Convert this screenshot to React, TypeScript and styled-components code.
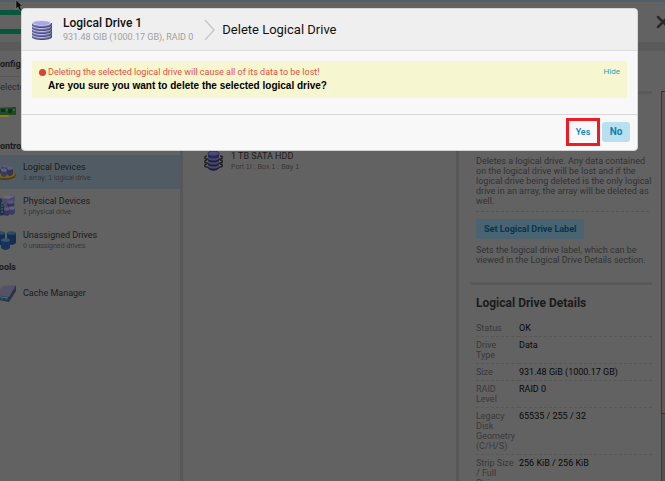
import React from "react";
import styled, { createGlobalStyle, css } from "styled-components";

const headingFont = `Roboto, sans-serif`;

const GlobalStyle = createGlobalStyle`
  * { box-sizing: border-box; }
  html, body { margin: 0; overflow: hidden; }
  body { background: #626262; color: #1b1b1b; font: 9px/10px Roboto, Arial, sans-serif; }
  button { font: inherit; border: 0; padding: 0; cursor: pointer; }
  h1, h2, h3, p, ul { margin: 0; padding: 0; }
`;

const Page = styled.div`
  height: 100vh;
  display: flex;
  flex-direction: column;
  overflow: hidden;
`;

const TopBar = styled.header`
  flex: none;
  height: 42px;
  display: flex;
  justify-content: space-between;
  align-items: center;
  border-top: 2px solid #4f5e68;
  overflow: hidden;
`;

const Logo = styled.div`
  width: 60px;
  height: 24px;
  border: solid #06573c;
  border-width: 5px 5px 5px 0;
`;

const CloseButton = styled.button`
  width: 14px;
  height: 14px;
  margin-right: -5px;
  background: none;
  svg { display: block; }
`;

const Band = styled.div`
  flex: none;
  height: 9px;
  background: #5a5a5a;
`;

const Columns = styled.div`
  flex: 1;
  min-height: 0;
  display: flex;
`;

const Sidebar = styled.nav`
  flex: 0 0 193px;
  margin-left: -10px;
  border-right: 3px solid #575757;
  overflow: hidden;
`;

const SideHeading = styled.h2<{ $ruled?: boolean }>`
  padding: 2px 0 1px 4px;
  font: bold 9px/16px ${headingFont};
  ${(p) => p.$ruled && css`
    padding: 5px 0 4px 4px;
    border-bottom: 1px solid #585858;
  `}
`;

const SideNote = styled.p`
  padding: 5px 0 5px 5px;
  color: #2b2b2b;
`;

const BoardSlot = styled.div`
  height: 39px;
  padding: 8px 0 0 2px;
  svg { display: block; }
`;

const NavList = styled.ul`
  list-style: none;
`;

const NavLink = styled.a<{ $active?: boolean }>`
  height: 34px;
  display: flex;
  align-items: center;
  gap: 7px;
  padding-left: 3px;
  color: inherit;
  text-decoration: none;
  background: ${(p) => (p.$active ? "#515b63" : "transparent")};
  svg { flex: none; }
`;

const NavTitle = styled.span`
  display: block;
  line-height: 11px;
`;

const NavSub = styled.span`
  display: block;
  font: 7px/10px "Liberation Sans", Arial, sans-serif;
  color: #363636;
`;

const DeviceArea = styled.section`
  flex: 1;
  min-width: 0;
  border-right: 3px solid #585858;
  padding: 99px 21px 0;
`;

const Device = styled.div`
  display: flex;
  align-items: center;
  gap: 8px;
`;

const Details = styled.aside`
  flex: 0 0 202px;
  padding: 40px 0 0 11px;
  overflow: hidden;
`;

const Actions = styled.section`
  margin-right: 9px;
  padding: 0 3px 0 6px;
  border-top: 3px solid #5a5a5a;
`;

const Description = styled.p`
  margin-right: -7px;
  color: #333333;
`;

const DeleteAction = styled.div`
  padding: 62px 0 5px;
  border-bottom: 1px dashed #545454;
`;

const LabelButton = styled.button`
  display: block;
  height: 20px;
  margin: 7px 0 6px;
  padding: 0 8px;
  border-radius: 3px;
  background: #496370;
  color: #043550;
  font: bold 9px/20px ${headingFont};
`;

const Facts = styled.section`
  margin: 17px 9px 0 0;
  border-top: 3px solid #595959;
  padding: 8px 0 0 6px;
`;

const FactsTitle = styled.h2`
  font: bold 12px/20px ${headingFont};
  margin-bottom: 7px;
`;

const FactTable = styled.table`
  width: 100%;
  border-collapse: separate;
  border-spacing: 0;
  th, td {
    padding: 3px 0;
    border-bottom: 1px dashed #575757;
    font-weight: normal;
    text-align: left;
    vertical-align: top;
  }
  th { width: 43px; padding-right: 2px; color: #393939; }
  td { color: #080808; }
`;

const Edge = styled.div`
  flex: 0 0 4px;
  margin-top: 40px;
  display: flex;
  flex-direction: column;
`;

const EdgeTrack = styled.div`
  height: 323px;
  border: solid #393335;
  border-width: 1px 0 1px 1px;
  background: #635659;
`;

const EdgeRest = styled.div`
  flex: 1;
  background: #515253;
  border-left: 1px solid #393939;
`;

const Overlay = styled.div`
  position: fixed;
  inset: 0;
  padding: 8px 27px 0 21px;
`;

const Dialog = styled.div`
  border: 1px solid #d3d5d5;
  border-radius: 4px;
  background: #f8f8f8;
  overflow: hidden;
`;

const DialogHeader = styled.header`
  height: 42px;
  display: flex;
  align-items: center;
  padding-left: 9px;
  background: #efefef;
  border-bottom: 1px solid #dddddd;
`;

const Subject = styled.div`
  margin: 0 11px 0 10px;
`;

const SubjectName = styled.h2`
  font: 500 12px/16px ${headingFont};
  color: #111;
`;

const SubjectMeta = styled.p`
  font: 9px/13px ${headingFont};
  color: #a0a0a0;
`;

const DialogTitle = styled.h1`
  margin-left: 6px;
  font: 13px/20px ${headingFont};
  color: #111;
`;

const Warning = styled.div`
  display: grid;
  grid-template-columns: 7px 1fr auto;
  column-gap: 2px;
  margin: 10px 10px 16px;
  padding: 5px 7px 4px;
  background: #f6f7d0;
`;

const Dot = styled.span`
  width: 7px;
  height: 7px;
  margin-top: 3px;
  border-radius: 50%;
  background: #db422d;
`;

const WarningText = styled.p`
  line-height: 12px;
  color: #e0523d;
`;

const Question = styled.p`
  font: bold 10px/16px "Liberation Sans", Arial, sans-serif;
  color: #000;
`;

const HideLink = styled.a`
  font-size: 8px;
  line-height: 12px;
  color: #1ba0c5;
  text-decoration: none;
`;

const DialogFooter = styled.footer`
  display: flex;
  justify-content: flex-end;
  align-items: center;
  gap: 2px;
  padding: 3px 7px 4px 0;
  border-top: 1px solid #d8d8d8;
`;

const Highlight = styled.div`
  border: 3px solid #ed1c24;
`;

const Choice = styled.button<{ $primary?: boolean }>`
  display: block;
  height: ${(p) => (p.$primary ? 20 : 22)}px;
  width: 28px;
  border-radius: 3px;
  font: ${(p) => (p.$primary ? "bold 10px" : "500 9px")}/20px ${headingFont};
  color: #0d7fb0;
  background: ${(p) => (p.$primary ? "#b9e0f1" : "#f8f8f8")};
`;

const Pointer = styled.svg`
  position: fixed;
  left: 15px;
  top: 0;
`;

function DiscStack({ size = 22 }: { size?: number }) {
  return (
    <svg width={size} height={size} viewBox="0 0 22 22" aria-hidden="true">
      {[17, 14, 11, 8, 5].map((y) => (
        <g key={y}>
          <path d={`M1 ${y - 1}v2c0 4 20 4 20 0v-2`} fill="#4c4c70" />
          <path d={`M1 ${y - 1}v1c0 4 19 4 19 0v-1`} fill="#7474bd" />
          <ellipse cx="10.5" cy={y - 1} rx="9.5" ry="2.7" fill="#dedef3" />
          <ellipse cx="10.5" cy={y - 1} rx="8.5" ry="2" fill="#a9a9e2" />
        </g>
      ))}
    </svg>
  );
}

function DiskIcon() {
  return (
    <svg width="19" height="22" viewBox="0 0 19 22" aria-hidden="true">
      <path d="M4 3v14c0 5 11 5 11 0V3" fill="#29294e" />
      {[7, 11, 15].map((y) => (
        <g key={y}>
          <path d={`M3 ${y - 1}c-3 0-3 3 0 3 4 3 9 3 13 0 3 0 3-3 0-3`} fill="none" stroke="#202024" strokeWidth="1.4" />
          <path d={`M4 ${y}c3 2 8 2 11 0v2c-3 2-8 2-11 0z`} fill="#474770" />
        </g>
      ))}
      <ellipse cx="9.5" cy="3.5" rx="5.5" ry="2.5" fill="#4b4b78" stroke="#30304c" />
    </svg>
  );
}

function Can({ x, y, w, h, body, top }: { x: number; y: number; w: number; h: number; body: string; top: string }) {
  return (
    <g>
      <path d={`M${x} ${y + 2}v${h - 4}q${w / 2} 4 ${w} 0v-${h - 4}`} fill={body} />
      <ellipse cx={x + w / 2} cy={y + 2} rx={w / 2} ry="1.8" fill={top} />
    </g>
  );
}

function ArrayIcon() {
  return (
    <svg width="23" height="22" viewBox="0 0 23 22" aria-hidden="true">
      <ellipse cx="11.5" cy="14" rx="11.5" ry="5" fill="#4a3b12" />
      <ellipse cx="11.5" cy="13" rx="11" ry="4.3" fill="#74601c" />
      <Can x={2} y={5} w={6} h={9} body="#33334f" top="#5a5a79" />
      <Can x={9} y={3} w={6} h={9} body="#33334f" top="#5a5a79" />
      <Can x={14} y={5} w={6} h={10} body="#353553" top="#5f5f7e" />
      <Can x={8} y={7} w={6} h={9} body="#3a3a5c" top="#606081" />
    </svg>
  );
}

function PhysicalIcon() {
  return (
    <svg width="23" height="24" viewBox="0 0 23 24" aria-hidden="true">
      <path d="M1 6 13 3v18L1 22z" fill="#252b4d" />
      <path d="M8 4 13 1l9 1-1 14-8 2z" fill="#494965" />
      <path d="m8 4 5-3 9 1-6 3z" fill="#67677e" />
      <path d="M8 9h2m-2 3h2m-2 3h2m-2 3h2" stroke="#287052" strokeWidth="1.5" />
      <Can x={14} y={6} w={7} h={8} body="#33335c" top="#585879" />
      <Can x={11} y={13} w={6} h={9} body="#35355e" top="#585879" />
      <Can x={16} y={12} w={6} h={9} body="#3b3b65" top="#606080" />
    </svg>
  );
}

function UnassignedIcon() {
  return (
    <svg width="23" height="22" viewBox="0 0 23 22" aria-hidden="true">
      <Can x={3} y={2} w={9} h={14} body="#132e50" top="#2f4b68" />
      <Can x={14} y={2} w={9} h={14} body="#132e50" top="#2f4b68" />
      <Can x={8} y={9} w={9} h={12} body="#17355c" top="#38536f" />
    </svg>
  );
}

function CacheIcon() {
  return (
    <svg width="23" height="20" viewBox="0 0 23 20" aria-hidden="true">
      <path d="m1 12 9-9 13-1-7 12z" fill="#535368" />
      <path d="m1 12 15 2v5L1 16z" fill="#20374b" />
      <path d="m16 14 7-12v6l-7 11z" fill="#303047" />
      <path d="m2 13 13 2" stroke="#6b6b86" />
      <path d="M4 15h2m2 1h2m2 0h2" stroke="#286484" />
    </svg>
  );
}

const devices = [
  { title: "Logical Devices", sub: "1 array, 1 logical drive", icon: <ArrayIcon />, active: true },
  { title: "Physical Devices", sub: "1 physical drive", icon: <PhysicalIcon /> },
  { title: "Unassigned Drives", sub: "0 unassigned drives", icon: <UnassignedIcon /> },
];

const facts = [
  ["Status", "OK"],
  ["Drive Type", "Data"],
  ["Size", "931.48 GiB (1000.17 GB)"],
  ["RAID Level", "RAID 0"],
  ["Legacy Disk Geometry (C/H/S)", "65535 / 255 / 32"],
  ["Strip Size / Full Stripe Size", "256 KiB / 256 KiB"],
];

export default function App() {
  return (
    <>
      <GlobalStyle />
      <Page>
        <TopBar>
          <Logo />
          <CloseButton aria-label="Close">
            <svg width="14" height="14" viewBox="0 0 14 14">
              <path d="m2 2 10 10M12 2 2 12" stroke="#292929" strokeWidth="2.5" strokeLinecap="round" />
            </svg>
          </CloseButton>
        </TopBar>
        <Band />
        <Columns>
          <Sidebar>
            <SideHeading $ruled>Configure</SideHeading>
            <SideNote>Selected</SideNote>
            <BoardSlot>
              <svg width="24" height="14" viewBox="0 0 24 14" aria-hidden="true">
                <path d="M0 3 24 2v8H0z" fill="#1f4a24" />
                <path d="M9 4h4v3H9zM16 4h4v4h-4z" fill="#102e1b" />
                <path d="M2 4h5m-4 3h3m8-2h2m5 0h2" stroke="#5b793b" />
                <path d="M3 10h14v2H3z" fill="#8a7822" />
              </svg>
            </BoardSlot>
            <SideHeading as="h3">Controllers</SideHeading>
            <NavList>
              {devices.map((d) => (
                <li key={d.title}>
                  <NavLink href="#" $active={d.active}>
                    {d.icon}
                    <span>
                      <NavTitle>{d.title}</NavTitle>
                      <NavSub>{d.sub}</NavSub>
                    </span>
                  </NavLink>
                </li>
              ))}
            </NavList>
            <SideHeading>Tools</SideHeading>
            <NavList>
              <li>
                <NavLink href="#">
                  <CacheIcon />
                  <NavTitle>Cache Manager</NavTitle>
                </NavLink>
              </li>
            </NavList>
          </Sidebar>
          <DeviceArea>
            <Device>
              <DiskIcon />
              <span>
                <NavTitle>1 TB SATA HDD</NavTitle>
                <NavSub>Port 1I : Box 1 : Bay 1</NavSub>
              </span>
            </Device>
          </DeviceArea>
          <Details>
            <Actions>
              <DeleteAction>
                <Description>
                  Deletes a logical drive. Any data contained on the logical drive will be lost and if the logical
                  drive being deleted is the only logical drive in an array, the array will be deleted as well.
                </Description>
              </DeleteAction>
              <LabelButton>Set Logical Drive Label</LabelButton>
              <Description>
                Sets the logical drive label, which can be viewed in the Logical Drive Details section.
              </Description>
            </Actions>
            <Facts>
              <FactsTitle>Logical Drive Details</FactsTitle>
              <FactTable>
                <tbody>
                  {facts.map(([k, v]) => (
                    <tr key={k}>
                      <th scope="row">{k}</th>
                      <td>{v}</td>
                    </tr>
                  ))}
                </tbody>
              </FactTable>
            </Facts>
          </Details>
          <Edge>
            <EdgeTrack />
            <EdgeRest />
          </Edge>
        </Columns>
      </Page>
      <Overlay>
        <Dialog role="dialog" aria-modal="true" aria-labelledby="dialog-title">
          <DialogHeader>
            <DiscStack />
            <Subject>
              <SubjectName>Logical Drive 1</SubjectName>
              <SubjectMeta>931.48 GIB (1000.17 GB), RAID 0</SubjectMeta>
            </Subject>
            <svg width="12" height="22" viewBox="0 0 12 22" aria-hidden="true">
              <path d="m1 1 9 10-9 10" fill="none" stroke="#c9c9c9" strokeWidth="1.5" />
            </svg>
            <DialogTitle id="dialog-title">Delete Logical Drive</DialogTitle>
          </DialogHeader>
          <Warning>
            <Dot />
            <div>
              <WarningText>Deleting the selected logical drive will cause all of its data to be lost!</WarningText>
              <Question>Are you sure you want to delete the selected logical drive?</Question>
            </div>
            <HideLink href="#">Hide</HideLink>
          </Warning>
          <DialogFooter>
            <Highlight>
              <Choice>Yes</Choice>
            </Highlight>
            <Choice $primary>No</Choice>
          </DialogFooter>
        </Dialog>
      </Overlay>
      <Pointer width="8" height="12" viewBox="0 0 8 12" aria-hidden="true">
        <path d="M1 0v9l2-2 2 4 1.5-1L5 6h2.5z" fill="#080808" stroke="#8a8a8a" strokeWidth=".5" />
      </Pointer>
    </>
  );
}
